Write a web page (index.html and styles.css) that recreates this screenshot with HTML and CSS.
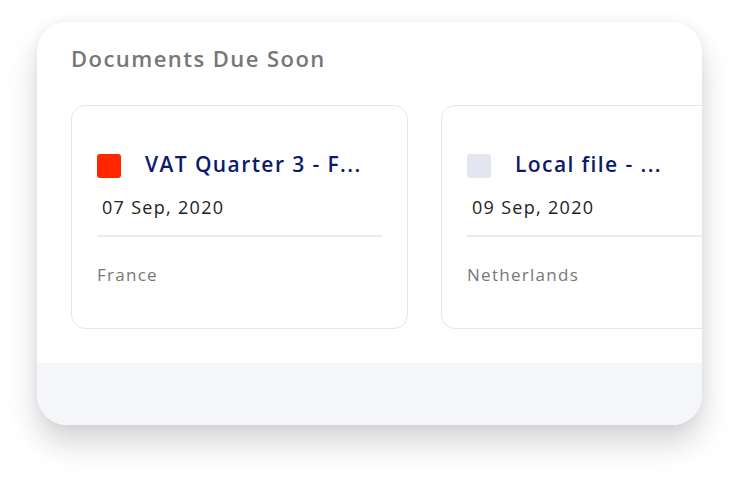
FILE: index.html
```html
<!DOCTYPE html>
<html>
<head>
<meta charset="utf-8">
<link rel="stylesheet" href="styles.css">
</head>
<body>
<div class="panel">
  <div class="panel-main">
    <h2 class="panel-title">Documents Due Soon</h2>
    <div class="cards">
      <div class="doc-card">
        <div class="doc-head">
          <span class="doc-mark mark-red"></span>
          <span class="doc-name">VAT Quarter 3 - F...</span>
        </div>
        <div class="doc-date">07 Sep, 2020</div>
        <div class="doc-divider"></div>
        <div class="doc-country">France</div>
      </div>
      <div class="doc-card">
        <div class="doc-head">
          <span class="doc-mark mark-grey"></span>
          <span class="doc-name">Local file - ...</span>
        </div>
        <div class="doc-date">09 Sep, 2020</div>
        <div class="doc-divider"></div>
        <div class="doc-country">Netherlands</div>
      </div>
    </div>
  </div>
  <div class="panel-foot"></div>
</div>
</body>
</html>
```
FILE: styles.css
```css
html, body {
  margin: 0;
  padding: 0;
  background: #ffffff;
}
html {
  height: 100%;
}
body {
  min-height: 100%;
  box-sizing: border-box;
  font-family: "Open Sans", "Liberation Sans", sans-serif;
  padding: 22px 0 0 37px;
}
.panel {
  width: 665px;
  height: 403px;
  border-radius: 30px;
  overflow: hidden;
  background: #ffffff;
  box-shadow: 0 18px 30px rgba(0, 0, 0, 0.17), 0 0 12px rgba(0, 0, 0, 0.05);
  display: flex;
  flex-direction: column;
}
.panel-main {
  height: 341px;
  padding: 0 0 0 34px;
  box-sizing: border-box;
}
.panel-foot {
  flex: 1;
  background: #f5f6fa;
}
.panel-title {
  margin: 0;
  padding-top: 21px;
  font-size: 22px;
  line-height: 30px;
  font-weight: 600;
  letter-spacing: 0.066em;
  color: #777777;
}
.cards {
  display: flex;
  gap: 33px;
  margin-top: 32px;
}
.doc-card {
  flex: 0 0 auto;
  width: 337px;
  height: 224px;
  box-sizing: border-box;
  border: 1px solid #e6e6ea;
  border-radius: 14px;
  padding: 48px 25px 0 25px;
}
.doc-head {
  display: flex;
  align-items: center;
  gap: 24px;
  height: 24px;
}
.doc-mark {
  flex: 0 0 24px;
  width: 24px;
  height: 24px;
  border-radius: 3px;
}
.mark-red { background: #ff2600; }
.mark-grey { background: #e3e6f0; }
.doc-name {
  font-size: 21px;
  line-height: 26px;
  margin-bottom: 5px;
  font-weight: 600;
  letter-spacing: 0.067em;
  color: #0c1a6c;
  white-space: nowrap;
}
.doc-date {
  margin-top: 17px;
  padding-left: 5px;
  font-size: 18px;
  line-height: 24px;
  letter-spacing: 0.072em;
  color: #222222;
}
.doc-divider {
  margin-top: 16px;
  height: 2px;
  background: #ececec;
}
.doc-country {
  margin-top: 27px;
  font-size: 17px;
  line-height: 22px;
  letter-spacing: 0.075em;
  color: #777777;
}
```
